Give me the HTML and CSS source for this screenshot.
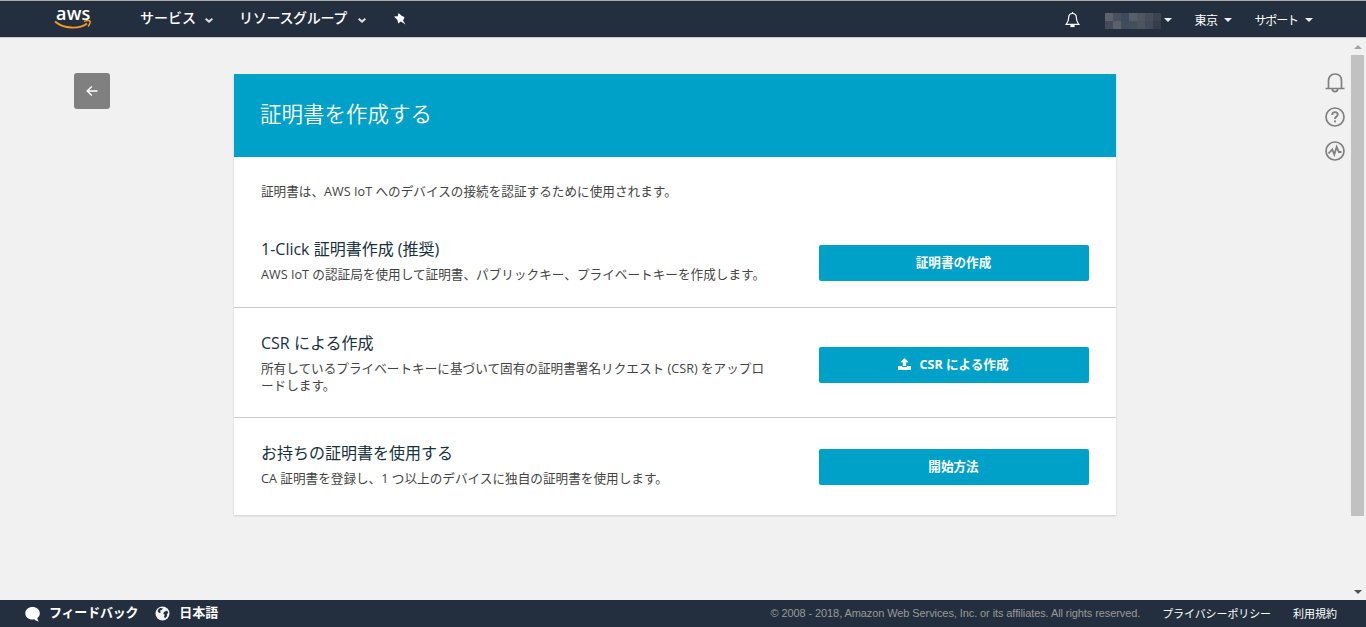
FILE: index.html
```html
<!DOCTYPE html>
<html lang="ja">
<head>
    <meta charset="UTF-8">
    <meta name="viewport" content="width=device-width, initial-scale=1.0">
    <title>AWS IoT</title>
    <link rel="stylesheet" href="styles.css">
</head>
<body>

    <header class="navbar">
        <a class="logo" href="#">
            <span>aws</span>
            <svg width="38" height="9" viewBox="0 0 38 9" fill="none" stroke="#f79a1f">
                <path d="M1 1.500C10 9 25 9.500 33 3.500" stroke-width="1.900"/>
                <path d="M30 1.400C33 .5 35.500.6 36 1.200C36.500 2 35.700 4.700 34 6.500" stroke-width="1.500"/>
            </svg>
        </a>
        <nav class="nav-main">
            <a class="nav-services" href="#">サービス</a>
            <svg class="chevron" width="8" height="5" viewBox="0 0 8 5"><path d="M.6.8L4 3.600L7.400.8" fill="none" stroke="#ddd" stroke-width="2"/></svg>
            <a class="nav-groups" href="#">リソースグループ</a>
            <svg class="chevron" width="8" height="5" viewBox="0 0 8 5"><path d="M.6.8L4 3.600L7.400.8" fill="none" stroke="#ddd" stroke-width="2"/></svg>
            <svg class="pin" width="12" height="12" viewBox="0 0 12 12" fill="#fff"><path d="M4.500 0L7.600 2.800L10.600 4.200L9.800 6.100L9 7.500L11.500 11.600L6.900 8.600L4.300 10.600L3.300 6.800L0 3.600L3.800 3.200Z"/></svg>
        </nav>
        <nav class="nav-right">
            <svg class="nav-bell" width="15" height="16" viewBox="0 0 15 16" fill="none" stroke="#fff" stroke-width="1.200">
                <path d="M7.500 1.500C4.800 1.500 3.700 3.400 3.700 5.500C3.700 9 2.700 10.300 1.200 12.300H13.800C12.300 10.300 11.300 9 11.300 5.500C11.300 3.400 10.200 1.500 7.500 1.500Z"/>
                <path d="M6 13.300H9V14.500H6Z" fill="#fff"/>
                <path d="M7.500 0V2"/>
            </svg>
            <svg class="account" width="56" height="16" viewBox="0 0 56 16" shape-rendering="crispEdges">
                <path fill="#5e626d" d="M0 0h8v8H0z"/><path fill="#454b5a" d="M0 8h8v8H0z"/>
                <path fill="#4a505d" d="M8 0h8v8H8z"/><path fill="#5b616b" d="M8 8h8v8H8z"/>
                <path fill="#3b4a5e" d="M16 0h8v8h-8z"/><path fill="#424b59" d="M16 8h8v8h-8z"/>
                <path fill="#56606a" d="M24 0h8v8h-8z"/><path fill="#434f5b" d="M24 8h8v8h-8z"/>
                <path fill="#505763" d="M32 0h8v8h-8z"/><path fill="#4d545f" d="M32 8h8v8h-8z"/>
                <path fill="#464e5b" d="M40 0h8v8h-8z"/><path fill="#424a57" d="M40 8h8v8h-8z"/>
                <path fill="#3b4250" d="M48 0h8v8h-8z"/><path fill="#353d4b" d="M48 8h8v8h-8z"/>
            </svg>
            <i class="caret caret-account"></i>
            <a class="nav-region" href="#">東京</a>
            <i class="caret"></i>
            <a class="nav-support" href="#">サポート</a>
            <i class="caret"></i>
        </nav>
    </header>

    <div class="page">
        <aside class="back-column">
            <button class="back" aria-label="戻る">
                <svg width="12" height="12" viewBox="0 0 12 12" fill="none" stroke="#fff" stroke-width="1.400"><path d="M11.500 6H1.500M5.800 1.400L1.200 6L5.800 10.600"/></svg>
            </button>
        </aside>

        <main class="card">
            <h1>証明書を作成する</h1>
            <p class="intro">証明書は、AWS IoT へのデバイスの接続を認証するために使用されます。</p>

            <section class="option option-first">
                <div class="option-text">
                    <h2>1-Click 証明書作成 (推奨)</h2>
                    <p>AWS IoT の認証局を使用して証明書、パブリックキー、プライベートキーを作成します。</p>
                </div>
                <button class="btn">証明書の作成</button>
            </section>
            <section class="option option-csr">
                <div class="option-text">
                    <h2>CSR による作成</h2>
                    <p>所有しているプライベートキーに基づいて固有の証明書署名リクエスト (CSR) をアップロ<br>ードします。</p>
                </div>
                <button class="btn">
                    <svg width="13" height="12" viewBox="0 0 13 12" fill="#fff"><path d="M6.500 0L10.600 4.300H8.200V8H4.800V4.300H2.400ZM0 8H4V9H9V8H13V12H0Z"/></svg>
                    CSR による作成
                </button>
            </section>
            <section class="option option-last">
                <div class="option-text">
                    <h2>お持ちの証明書を使用する</h2>
                    <p>CA 証明書を登録し、1 つ以上のデバイスに独自の証明書を使用します。</p>
                </div>
                <button class="btn">開始方法</button>
            </section>
        </main>

        <aside class="side-icons">
            <svg width="20" height="20" viewBox="0 0 20 20" fill="none" stroke="#808080" stroke-width="1.700">
                <path d="M3.500 15.500V8C3.500 3.500 6 1 10 1S16.500 3.500 16.500 8V15.500M.5 15.500H19.500M7.300 16.200C7.600 19.500 12.400 19.500 12.700 16.200"/>
            </svg>
            <svg width="20" height="20" viewBox="0 0 20 20" fill="none" stroke="#808080" stroke-width="1.700">
                <circle cx="10" cy="10" r="9"/>
                <path d="M7.200 8C7.200 4.200 12.900 4.300 12.800 7.500C12.700 9.500 10 9.600 10 12" stroke-width="1.900"/>
                <path d="M10 13.400V15.300" stroke-width="2"/>
            </svg>
            <svg width="20" height="20" viewBox="0 0 20 20" fill="none" stroke="#808080" stroke-width="1.700">
                <circle cx="10" cy="10" r="9"/>
                <path d="M3.500 12.500L7.300 8.500L9.300 13.500L11.700 5.800L13.800 11H16.500" stroke-width="1.800"/>
            </svg>
        </aside>

        <div class="scrollbar">
            <i class="arrow-up"></i>
            <div class="thumb"></div>
            <i class="arrow-down"></i>
        </div>
    </div>

    <footer class="footer">
        <svg class="bubble" width="16" height="16" viewBox="0 0 16 16" fill="#fff"><path d="M7.500 1C11.500 1 14.800 3.700 14.800 7.200C14.800 9.200 13.900 10.900 12.400 12C12.500 13.500 13 14.500 14 15.500C12.200 15.400 10.600 14.700 9.300 13.300C4.200 14.300.3 11.400.3 7.200C.3 3.700 3.500 1 7.500 1Z"/></svg>
        <a class="feedback" href="#">フィードバック</a>
        <svg class="globe" width="15" height="15" viewBox="0 0 15 15"><circle cx="7.500" cy="7.500" r="7" fill="#f2f2f2"/><path fill="#232f3e" d="M3.500 3L5.300 2L7.800 2.300L6.800 4L5 4.600L5.800 6.500L4.200 7L2.700 5.500ZM9 6L12 4.600L13.300 7L11.800 8.200L12.200 10L10 12.300L9 10.800L9.700 8.800L8.300 7.700Z"/></svg>
        <a class="language" href="#">日本語</a>
        <span class="copyright">© 2008 - 2018, Amazon Web Services, Inc. or its affiliates. All rights reserved.</span>
        <a class="privacy" href="#">プライバシーポリシー</a>
        <a class="terms" href="#">利用規約</a>
    </footer>

</body>
</html>
```

FILE: styles.css
```css
* {
    box-sizing: border-box;
}

body {
    font-family: "Open Sans", "Noto Sans CJK JP", sans-serif;
    font-size: 12.6px;
    color: #444;
    background-color: #f1f1f1;
    margin: 0;
    height: 100vh;
    display: flex;
    flex-direction: column;
    overflow: hidden;
}

a {
    color: #fff;
    text-decoration: none;
    white-space: nowrap;
}

svg {
    display: block;
    flex: none;
}

h1, h2, p {
    margin: 0;
    font-weight: normal;
}

/* Header */
.navbar {
    display: flex;
    height: 38px;
    flex: none;
    background-color: #232f3e;
    border-top: 1px solid #aaa;
    border-bottom: 1px solid #ccc;
    padding: 0 53px 0 54px;
}

.logo {
    width: 86px;
    font-size: 18px;
    line-height: 18px;
    padding-top: 3px;
}

.logo span {
    display: block;
    height: 16px;
    padding-left: 2px;
    font-weight: 600;
    letter-spacing: 0.2px;
}

.nav-main, .nav-right {
    display: flex;
    align-items: center;
    font-family: "Noto Sans CJK JP", sans-serif;
    height: 35px;
}

.nav-main {
    font-size: 14px;
    font-weight: 500;
}

.nav-main a {
    padding-bottom: 3px;
}

.nav-services {
    width: 65px;
}

.nav-groups {
    width: 119px;
    margin-left: 26px;
    letter-spacing: -0.3px;
}

.chevron {
    margin-top: 4px;
}

.pin {
    margin: 1px 0 0 28px;
}

.nav-right {
    margin-left: auto;
    font-size: 12px;
    padding-top: 2px;
}

.account {
    margin: 3px 3px 0 25px;
}

.caret {
    border: 4px solid transparent;
    border-top-color: #eee;
    border-bottom: 0;
    margin: 0 0 0 7px;
}

.caret-account {
    margin-left: 0;
}

.nav-region {
    margin-left: 22px;
    letter-spacing: -0.5px;
}

.nav-support {
    margin-left: 22px;
    letter-spacing: -1.1px;
}

/* Content */
.page {
    flex: 1;
    display: flex;
    min-height: 0;
}

.back-column {
    width: 234px;
    padding: 35px 0 0 74px;
}

.back {
    width: 36px;
    height: 36px;
    padding: 0;
    display: flex;
    align-items: center;
    justify-content: center;
    background-color: #808080;
    border: none;
    border-radius: 3px;
}

.card {
    width: 882px;
    height: 441px;
    margin-top: 36px;
    background-color: #fff;
    box-shadow: 0 1px 2px rgba(0, 0, 0, 0.15);
}

h1 {
    height: 83px;
    padding: 0 26px;
    line-height: 80px;
    font-size: 21.5px;
    font-weight: 350;
    color: #fff;
    background-color: #00a1c9;
}

.intro {
    height: 62px;
    padding: 25px 27px 0;
    line-height: 19px;
    letter-spacing: 0.03px;
}

.option {
    display: flex;
    justify-content: space-between;
    padding: 0 27px;
}

.option + .option {
    border-top: 1px solid #ccc;
}

.option-text {
    width: 520px;
    white-space: nowrap;
}

.option h2 {
    font-size: 16px;
    line-height: 24px;
    color: #16323d;
}

.option p {
    line-height: 17px;
    margin-top: 5px;
    letter-spacing: 0.03px;
}

.option-first {
    height: 88px;
    padding-top: 18px;
}

.option-csr {
    height: 110px;
    padding-top: 23px;
}

.option-last {
    height: 98px;
    padding-top: 23px;
}

.btn {
    width: 270px;
    height: 36px;
    display: flex;
    align-items: center;
    justify-content: center;
    gap: 8px;
    margin-top: 8px;
    padding: 0 1px 3px 0;
    font-family: inherit;
    font-size: 12.6px;
    font-weight: bold;
    color: #fff;
    background-color: #00a1c9;
    border: none;
    border-radius: 2px;
}

.option-csr .btn {
    margin-top: 16px;
}

.side-icons {
    display: flex;
    flex-direction: column;
    gap: 14px;
    margin-left: 208.5px;
    padding-top: 34.500px;
}

/* Scrollbar */
.scrollbar {
    display: flex;
    flex-direction: column;
    align-items: center;
    width: 15px;
    margin-left: auto;
    padding: 7px 2px 6px 0;
}

.thumb {
    width: 13px;
    height: 461px;
    margin: 6px 0 auto;
    background-color: #c1c1c1;
}

.arrow-up, .arrow-down {
    border: 4px solid transparent;
}

.arrow-up {
    border-top: 0;
    border-bottom-color: #a3a3a3;
}

.arrow-down {
    border-bottom: 0;
    border-top-color: #505050;
}

/* Footer */
.footer {
    display: flex;
    align-items: center;
    height: 27px;
    flex: none;
    padding: 0 29px 0 25px;
    background-color: #232f3e;
    font-family: "Noto Sans CJK JP", sans-serif;
    font-size: 13px;
    font-weight: bold;
}

.footer a {
    padding-bottom: 4px;
}

.feedback {
    margin-left: 8px;
    letter-spacing: -0.2px;
}

.globe {
    margin: 0 9px 0 17px;
}

.copyright {
    margin-left: auto;
    padding-bottom: 2px;
    font-family: "Liberation Sans", Arial, sans-serif;
    font-size: 11px;
    font-weight: normal;
    letter-spacing: -0.09px;
    color: #999;
}

.footer .privacy, .footer .terms {
    font-size: 11px;
    font-weight: normal;
    margin-left: 22px;
    padding-bottom: 2px;
}

.privacy {
    letter-spacing: -0.1px;
}
```
